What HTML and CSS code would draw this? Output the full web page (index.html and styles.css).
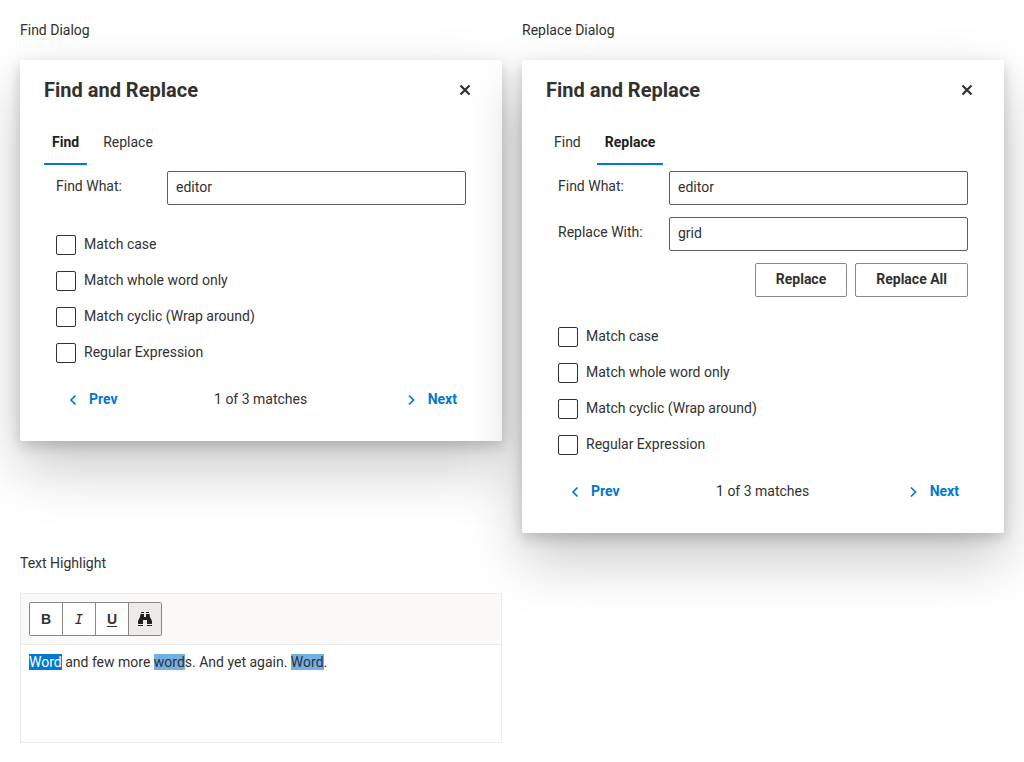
FILE: index.html
```
<!DOCTYPE html>
<html lang="en">
<head>
<meta charset="utf-8">
<meta name="viewport" content="width=device-width, initial-scale=1">
<title>Find and Replace</title>
<link rel="stylesheet" href="styles.css">
</head>
<body>
<main class="page">
  <section class="example">
    <span class="caption">Find Dialog</span>
    <div class="dialog" role="dialog" aria-labelledby="t1">
      <header class="titlebar">
        <h2 class="title" id="t1">Find and Replace</h2>
        <button class="close" type="button" aria-label="Close"><svg class="icon" viewBox="0 0 16 16"><path d="M3.500 3.500l9 9M12.500 3.500l-9 9" fill="none" stroke="currentColor" stroke-width="2.200"/></svg></button>
      </header>
      <div class="tabs" role="tablist">
        <button class="tab tab-active" type="button" role="tab" aria-selected="true">Find</button>
        <button class="tab" type="button" role="tab" aria-selected="false">Replace</button>
      </div>
      <form class="content">
        <div class="fields">
          <label class="label" for="find1">Find What:</label>
          <input class="textbox" id="find1" type="text" value="editor">
        </div>
        <div class="options">
          <label class="option"><input class="check" type="checkbox"><span>Match case</span></label>
          <label class="option"><input class="check" type="checkbox"><span>Match whole word only</span></label>
          <label class="option"><input class="check" type="checkbox"><span>Match cyclic (Wrap around)</span></label>
          <label class="option"><input class="check" type="checkbox"><span>Regular Expression</span></label>
        </div>
        <div class="matches">
          <button class="link-button" type="button"><svg class="icon" viewBox="0 0 16 16"><path d="M10.500 4.500l-4.500 4.500 4.500 4.500" fill="none" stroke="currentColor" stroke-width="1.700"/></svg>Prev</button>
          <span>1 of 3 matches</span>
          <button class="link-button" type="button"><svg class="icon" viewBox="0 0 16 16"><path d="M5 4.500l4.500 4.500-4.500 4.500" fill="none" stroke="currentColor" stroke-width="1.700"/></svg>Next</button>
        </div>
      </form>
    </div>
  </section>

  <section class="example">
    <span class="caption">Replace Dialog</span>
    <div class="dialog" role="dialog" aria-labelledby="t2">
      <header class="titlebar">
        <h2 class="title" id="t2">Find and Replace</h2>
        <button class="close" type="button" aria-label="Close"><svg class="icon" viewBox="0 0 16 16"><path d="M3.500 3.500l9 9M12.500 3.500l-9 9" fill="none" stroke="currentColor" stroke-width="2.200"/></svg></button>
      </header>
      <div class="tabs" role="tablist">
        <button class="tab" type="button" role="tab" aria-selected="false">Find</button>
        <button class="tab tab-active" type="button" role="tab" aria-selected="true">Replace</button>
      </div>
      <form class="content">
        <div class="fields">
          <label class="label" for="find2">Find What:</label>
          <input class="textbox" id="find2" type="text" value="editor">
          <label class="label" for="with2">Replace With:</label>
          <input class="textbox" id="with2" type="text" value="grid">
          <div class="actions">
            <button class="button" type="button">Replace</button>
            <button class="button" type="button">Replace All</button>
          </div>
        </div>
        <div class="options">
          <label class="option"><input class="check" type="checkbox"><span>Match case</span></label>
          <label class="option"><input class="check" type="checkbox"><span>Match whole word only</span></label>
          <label class="option"><input class="check" type="checkbox"><span>Match cyclic (Wrap around)</span></label>
          <label class="option"><input class="check" type="checkbox"><span>Regular Expression</span></label>
        </div>
        <div class="matches">
          <button class="link-button" type="button"><svg class="icon" viewBox="0 0 16 16"><path d="M10.500 4.500l-4.500 4.500 4.500 4.500" fill="none" stroke="currentColor" stroke-width="1.700"/></svg>Prev</button>
          <span>1 of 3 matches</span>
          <button class="link-button" type="button"><svg class="icon" viewBox="0 0 16 16"><path d="M5 4.500l4.500 4.500-4.500 4.500" fill="none" stroke="currentColor" stroke-width="1.700"/></svg>Next</button>
        </div>
      </form>
    </div>
  </section>

  <section class="example">
    <span class="caption">Text Highlight</span>
    <div class="editor">
      <div class="toolbar" role="toolbar" aria-label="Formatting">
        <div class="group">
          <button class="tool" type="button" aria-label="Bold"><span class="bold">B</span></button>
          <button class="tool" type="button" aria-label="Italic"><span class="italic">I</span></button>
          <button class="tool" type="button" aria-label="Underline"><span class="underline">U</span></button>
          <button class="tool tool-active" type="button" aria-label="Find" aria-pressed="true"><svg class="icon" viewBox="0 0 16 16"><path d="M4 1h3v1H4zM9 1h3v1H9zM3.500 3H7v3h2V3h3.500l.5 3 2 4v2.500l-.5.500H10V9H6v4H1.500L1 12.500V10l2-4zM1 14h5v1H1zM10 14h5v1h-5z" fill="currentColor"/></svg></button>
        </div>
      </div>
      <p class="text"><mark class="hit hit-current">Word</mark> and few more <mark class="hit">word</mark>s. And yet again. <mark class="hit">Word</mark>.</p>
    </div>
  </section>
</main>
</body>
</html>
```
FILE: styles.css
```
* { box-sizing: border-box; }

body {
  margin: 0;
  background: #fff;
  color: #323130;
  font: 14px/20px Roboto, sans-serif;
}

button, input { font: inherit; color: inherit; }
button { cursor: pointer; }

.page {
  display: grid;
  grid-template-columns: 1fr 1fr;
  gap: 20px;
  align-items: start;
  padding: 20px;
}

.example { display: grid; gap: 20px; }

.dialog {
  background: #fff;
  border-radius: 2px;
  box-shadow: 0 26px 58px rgba(0, 0, 0, .22), 0 5px 14px rgba(0, 0, 0, .18);
}

.titlebar {
  display: flex;
  align-items: center;
  justify-content: space-between;
  padding: 16px 24px;
}

.title { margin: 0; font-size: 20px; line-height: 28px; font-weight: 700; }

.icon { display: block; width: 16px; height: 16px; }

.close { padding: 5px; border: 0; background: none; }

.tabs { display: flex; gap: 8px; padding: 0 24px; }

.tab {
  padding: 12px 8px 11px;
  border: 0;
  border-bottom: 2px solid transparent;
  background: none;
}

.tab-active { border-color: #0078d4; color: #201f1e; font-weight: 700; }

.content { padding: 6px 36px 25px; }

.fields { display: grid; grid-template-columns: 99px 1fr; gap: 12px; }

.label { padding-top: 5px; }

.textbox {
  width: 100%;
  height: 34px;
  padding: 5px 8px 7px;
  border: 1px solid #605e5c;
  border-radius: 2px;
  background: #fff;
}

.actions { grid-column: 1 / -1; display: flex; justify-content: flex-end; gap: 8px; }

.button {
  padding: 5px 20px 7px;
  border: 1px solid #8a8886;
  border-radius: 2px;
  background: #fff;
  font-weight: 700;
}

.options { display: grid; gap: 16px; padding: 30px 0 19px; }

.option { display: flex; gap: 8px; height: 20px; line-height: 18px; }

.check {
  appearance: none;
  width: 20px;
  height: 20px;
  margin: 0;
  border: 1px solid #323130;
  border-radius: 2px;
  background: #fff;
}

.check:checked { background: #0078d4; border-color: #0078d4; }

.matches { display: flex; align-items: center; justify-content: space-between; }

.link-button {
  display: flex;
  align-items: center;
  gap: 8px;
  padding: 7px 9px;
  border: 0;
  background: none;
  color: #0078d4;
  font-weight: 700;
}

.editor { height: 150px; border: 1px solid #edebe9; background: #fff; }

.toolbar { padding: 8px; border-bottom: 1px solid #edebe9; background: #faf9f8; }

.group {
  display: inline-flex;
  vertical-align: top;
  border: 1px solid #8a8886;
  border-radius: 2px;
  overflow: hidden;
}

.tool {
  display: grid;
  place-items: center;
  width: 33px;
  height: 32px;
  padding: 0;
  border: 0;
  border-right: 1px solid #8a8886;
  background: #fff;
}

.tool-active { width: 32px; border-right: 0; background: #edebe9; color: #201f1e; }

.bold { font-family: "Liberation Sans", sans-serif; font-weight: 700; }
.italic { font-family: "DejaVu Sans Mono", monospace; font-style: italic; }

.underline {
  font-family: "Liberation Sans", sans-serif;
  font-weight: 700;
  text-decoration: underline 1px;
  text-underline-offset: 2px;
}

.text { margin: 0; padding: 7px 8px; }

.hit { background: #71afe5; color: inherit; }
.hit-current { background: #0078d4; color: #fff; }
```
